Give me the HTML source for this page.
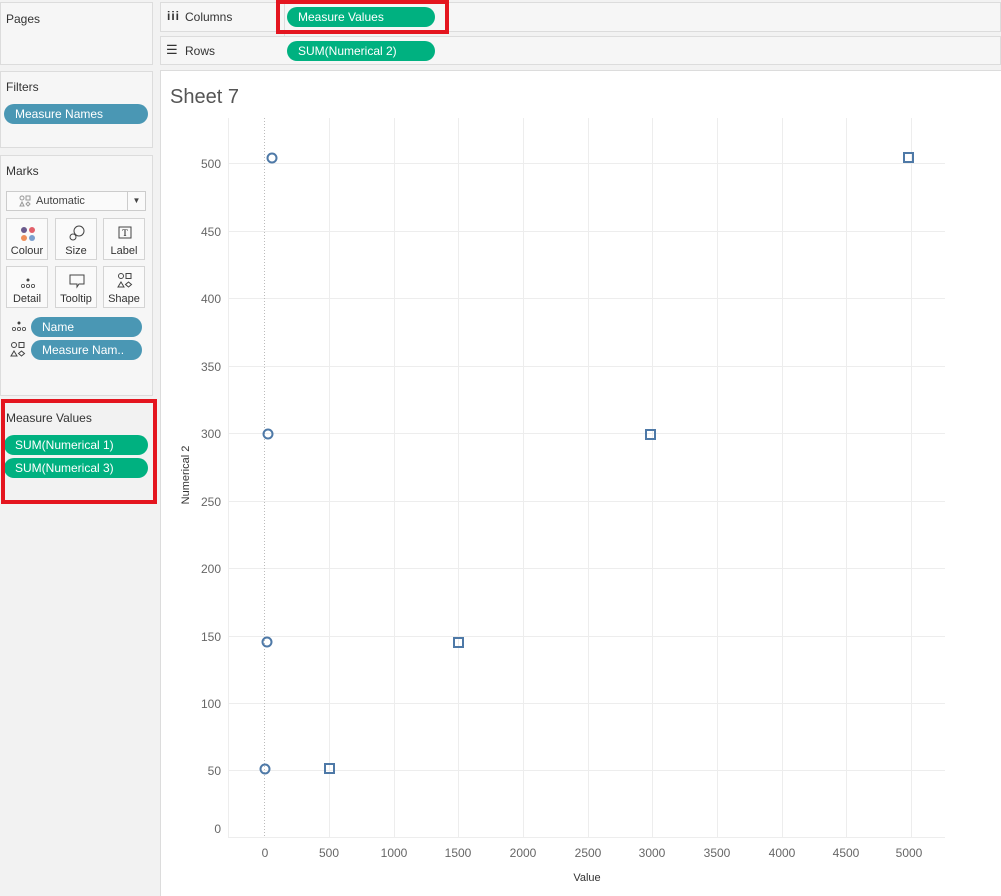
<!DOCTYPE html>
<html><head><meta charset="utf-8"><style>
*{box-sizing:border-box;margin:0;padding:0}
body{width:1001px;height:896px;background:#f2f2f2;font-family:"Liberation Sans",sans-serif;font-size:12px;color:#333;position:relative;overflow:hidden}
.box{position:absolute;background:#f6f6f6;border:1px solid #dcdcdc}
.lbl{position:absolute;font-size:12px;color:#333}
.pill{position:absolute;height:20px;border-radius:10px;color:#fff;font-size:12px;line-height:20px;padding-left:11px;white-space:nowrap}
.g{background:#00b180}.b{background:#4a97b4}
.card{position:absolute;width:42px;height:42px;border:1px solid #d4d4d4;background:#fafafa;text-align:center;font-size:11px;color:#333}
.card span{position:absolute;bottom:2px;left:0;right:0}
.card svg{position:absolute;left:0;top:2px}
.red{position:absolute;border:4px solid #e4151f}
</style></head><body>
<div class="box" style="left:0;top:2px;width:153px;height:63px"></div>
<div class="lbl" style="left:6px;top:12px">Pages</div>
<div class="box" style="left:0;top:71px;width:153px;height:77px"></div>
<div class="lbl" style="left:6px;top:80px">Filters</div>
<div class="pill b" style="left:4px;top:104px;width:144px">Measure Names</div>
<div class="box" style="left:0;top:155px;width:153px;height:241px"></div>
<div class="lbl" style="left:6px;top:164px">Marks</div>
<div style="position:absolute;left:6px;top:191px;width:140px;height:20px;border:1px solid #ccc;background:#fafafa;font-size:11px;line-height:18px;padding-left:29px;color:#444"><svg width="12" height="12" style="position:absolute;left:12px;top:3px"><circle cx="3" cy="3" r="2" fill="none" stroke="#999"/><rect x="7" y="1" width="4" height="4" fill="none" stroke="#999"/><path d="M3 7l2 4h-4z" fill="none" stroke="#999"/><path d="M9 7l2 2-2 2-2-2z" fill="none" stroke="#999"/></svg>Automatic<span style="position:absolute;right:0;top:0;width:18px;border-left:1px solid #ccc;height:18px;text-align:center;font-size:8px">▼</span></div>
<div class="card" style="left:6px;top:218px"><svg width="42" height="22"><circle cx="17" cy="9" r="3" fill="#6a5a8c"/><circle cx="25" cy="9" r="3" fill="#e2606a"/><circle cx="17" cy="17" r="3" fill="#ef8f5a"/><circle cx="25" cy="17" r="3" fill="#7a9fcf"/></svg><span>Colour</span></div>
<div class="card" style="left:55px;top:218px"><svg width="42" height="22"><circle cx="23" cy="10" r="5" fill="none" stroke="#444"/><circle cx="17" cy="16" r="3" fill="#fafafa" stroke="#444"/></svg><span>Size</span></div>
<div class="card" style="left:103px;top:218px"><svg width="42" height="22"><rect x="15" y="6" width="12" height="11" fill="none" stroke="#444"/><text x="21" y="15" font-size="9" text-anchor="middle" font-family="Liberation Serif">T</text></svg><span>Label</span></div>
<div class="card" style="left:6px;top:266px"><svg width="42" height="22"><circle cx="21" cy="11" r="1.5" fill="#444"/><circle cx="16" cy="17" r="1.6" fill="none" stroke="#444" stroke-width=".8"/><circle cx="21" cy="17" r="1.6" fill="none" stroke="#444" stroke-width=".8"/><circle cx="26" cy="17" r="1.6" fill="none" stroke="#444" stroke-width=".8"/></svg><span>Detail</span></div>
<div class="card" style="left:55px;top:266px"><svg width="42" height="22"><path d="M14 6h14v9h-5l-2 3v-3h-7z" fill="none" stroke="#444"/></svg><span>Tooltip</span></div>
<div class="card" style="left:103px;top:266px"><svg width="42" height="22"><circle cx="17" cy="7" r="2.5" fill="none" stroke="#444"/><rect x="22" y="4.5" width="5" height="5" fill="none" stroke="#444"/><path d="M17 13l3 5h-6z" fill="none" stroke="#444"/><path d="M24.5 13l3 2.5-3 2.5-3-2.5z" fill="none" stroke="#444"/></svg><span>Shape</span></div>
<svg width="20" height="14" style="position:absolute;left:11px;top:320px"><circle cx="8" cy="3" r="1.5" fill="#444"/><circle cx="3" cy="9" r="1.6" fill="none" stroke="#444" stroke-width=".8"/><circle cx="8" cy="9" r="1.6" fill="none" stroke="#444" stroke-width=".8"/><circle cx="13" cy="9" r="1.6" fill="none" stroke="#444" stroke-width=".8"/></svg>
<div class="pill b" style="left:31px;top:317px;width:111px">Name</div>
<svg width="20" height="18" style="position:absolute;left:10px;top:341px"><circle cx="4" cy="4" r="2.5" fill="none" stroke="#444"/><rect x="9" y="1.5" width="5" height="5" fill="none" stroke="#444"/><path d="M4 10l3 5h-6z" fill="none" stroke="#444"/><path d="M11.5 10l3 2.5-3 2.5-3-2.5z" fill="none" stroke="#444"/></svg>
<div class="pill b" style="left:31px;top:340px;width:111px">Measure Nam..</div>
<div class="lbl" style="left:6px;top:411px">Measure Values</div>
<div class="pill g" style="left:4px;top:435px;width:144px">SUM(Numerical 1)</div>
<div class="pill g" style="left:4px;top:458px;width:144px">SUM(Numerical 3)</div>
<div class="red" style="left:1px;top:399px;width:156px;height:105px"></div>

<div class="box" style="left:160px;top:2px;width:841px;height:30px;background:#f6f6f6"></div>
<div style="position:absolute;left:284px;top:2px;width:1px;height:63px;background:#dcdcdc"></div>
<div class="lbl" style="left:167px;top:9px;font-weight:bold;letter-spacing:1px">iii</div>
<div class="lbl" style="left:185px;top:10px">Columns</div>
<div class="pill g" style="left:287px;top:7px;width:148px">Measure Values</div>
<div class="red" style="left:276px;top:0;width:173px;height:34px"></div>
<div class="box" style="left:160px;top:36px;width:841px;height:29px"></div>
<div class="lbl" style="left:166px;top:42px;font-size:13px">☰</div>
<div class="lbl" style="left:185px;top:44px">Rows</div>
<div class="pill g" style="left:287px;top:41px;width:148px">SUM(Numerical 2)</div>
<div style="position:absolute;left:160px;top:70px;width:841px;height:826px;background:#fff;border-left:1px solid #dcdcdc;border-top:1px solid #dcdcdc"></div>
<div class="lbl" style="left:170px;top:86px;font-size:20px;color:#555">Sheet 7</div>
<svg width="1001" height="896" style="position:absolute;left:0;top:0" font-family="Liberation Sans" font-size="12" fill="#666">
<g stroke="#ededed" stroke-width="1">
<line x1="228.5" y1="118" x2="228.5" y2="838"/>
<line x1="329.5" y1="118" x2="329.5" y2="838"/><line x1="394.5" y1="118" x2="394.5" y2="838"/><line x1="458.5" y1="118" x2="458.5" y2="838"/><line x1="523.5" y1="118" x2="523.5" y2="838"/><line x1="588.5" y1="118" x2="588.5" y2="838"/><line x1="652.5" y1="118" x2="652.5" y2="838"/><line x1="717.5" y1="118" x2="717.5" y2="838"/><line x1="782.5" y1="118" x2="782.5" y2="838"/><line x1="846.5" y1="118" x2="846.5" y2="838"/><line x1="911.5" y1="118" x2="911.5" y2="838"/>
<line x1="228" y1="163.5" x2="945" y2="163.5"/><line x1="228" y1="231.5" x2="945" y2="231.5"/><line x1="228" y1="298.5" x2="945" y2="298.5"/><line x1="228" y1="366.5" x2="945" y2="366.5"/><line x1="228" y1="433.5" x2="945" y2="433.5"/><line x1="228" y1="501.5" x2="945" y2="501.5"/><line x1="228" y1="568.5" x2="945" y2="568.5"/><line x1="228" y1="636.5" x2="945" y2="636.5"/><line x1="228" y1="703.5" x2="945" y2="703.5"/><line x1="228" y1="770.5" x2="945" y2="770.5"/><line x1="228" y1="837.5" x2="945" y2="837.5"/>
</g>
<line x1="264.5" y1="118" x2="264.5" y2="838" stroke="#bbb" stroke-dasharray="1,2"/>
<g text-anchor="end"><text x="221" y="168">500</text><text x="221" y="236">450</text><text x="221" y="303">400</text><text x="221" y="371">350</text><text x="221" y="438">300</text><text x="221" y="506">250</text><text x="221" y="573">200</text><text x="221" y="641">150</text><text x="221" y="708">100</text><text x="221" y="775">50</text><text x="221" y="833">0</text></g>
<g text-anchor="middle"><text x="265" y="857">0</text><text x="329" y="857">500</text><text x="394" y="857">1000</text><text x="458" y="857">1500</text><text x="523" y="857">2000</text><text x="588" y="857">2500</text><text x="652" y="857">3000</text><text x="717" y="857">3500</text><text x="782" y="857">4000</text><text x="846" y="857">4500</text><text x="909" y="857">5000</text>
<text x="587" y="881" fill="#333" font-size="11">Value</text></g>
<text transform="translate(189,475) rotate(-90)" text-anchor="middle" fill="#333" font-size="11">Numerical 2</text>
<g fill="none" stroke="#4e79a7" stroke-width="2">
<circle cx="272" cy="158" r="4.5"/><circle cx="268" cy="434" r="4.5"/><circle cx="267" cy="642" r="4.5"/><circle cx="265" cy="769" r="4.5"/>
<rect x="904" y="153" width="9" height="9"/><rect x="646" y="430" width="9" height="9"/><rect x="454" y="638" width="9" height="9"/><rect x="325" y="764" width="9" height="9"/>
</g>
</svg>
</body></html>
